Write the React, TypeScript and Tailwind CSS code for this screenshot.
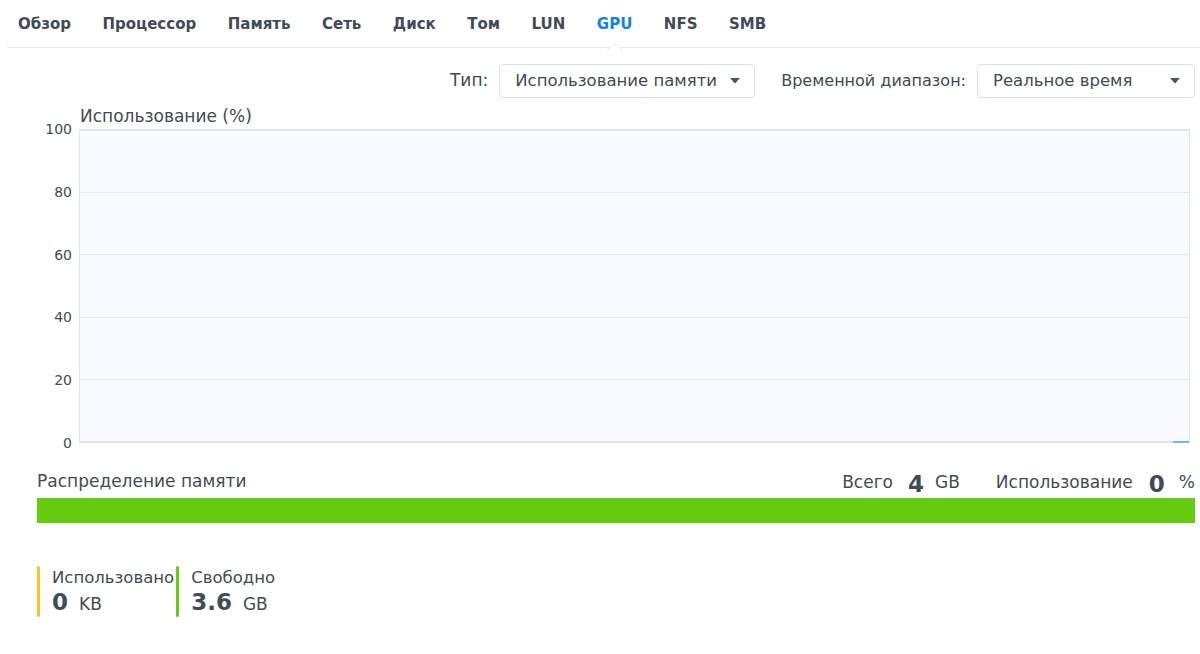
import { useState } from 'react';

const tabs = ['Обзор', 'Процессор', 'Память', 'Сеть', 'Диск', 'Том', 'LUN', 'GPU', 'NFS', 'SMB'];
const ticks = [100, 80, 60, 40, 20, 0];

function Caret() {
  return (
    <svg width="10" height="6" viewBox="0 0 10 6" className="shrink-0">
      <path d="M0 0 L10 0 L5 5.5 Z" fill="#4a5360" />
    </svg>
  );
}

function Select({ value, width }: { value: string; width: string }) {
  return (
    <div className={`flex h-[34px] ${width} items-center rounded-[4px] border border-[#dbe1e8] bg-white pl-[15px] pr-[14px]`}>
      <div className="mr-[8px] flex-1 whitespace-nowrap text-[16.5px] text-[#414b55]">{value}</div>
      <Caret />
    </div>
  );
}

export default function App() {
  const [active, setActive] = useState('GPU');

  return (
    <div className="h-[654px] w-[1200px] overflow-hidden bg-white text-[#414b55]" style={{ fontFamily: '"DejaVu Sans", Verdana, sans-serif' }}>
      {/* tabs */}
      <div className="relative ml-[7px] flex h-[48px] items-center gap-[31.5px] border-b border-[#e3e9f1] pl-[11px] pt-[1px]">
        {tabs.map((t) => (
          <button
            key={t}
            onClick={() => setActive(t)}
            className={`relative text-[15px] font-bold ${active === t ? 'text-[#0b84e8]' : 'text-[#414b55]'}`}
          >
            {t}
            {active === t && (
              <svg width="16" height="8" viewBox="0 0 16 8" className="absolute left-1/2 top-[30px] -translate-x-1/2">
                <path d="M0 8 L8 0.5 L16 8" fill="white" stroke="#e3e9f1" strokeWidth="1" />
                <rect x="1" y="7.5" width="14" height="2" fill="white" />
              </svg>
            )}
          </button>
        ))}
      </div>

      {/* toolbar */}
      <div className="mt-[16px] flex items-center justify-end pr-[5px]">
        <span className="mr-[11px] text-[17px] text-[#414b55]">Тип:</span>
        <Select value="Использование памяти" width="w-[256px]" />
        <span className="ml-[26px] mr-[11px] text-[16px] text-[#414b55]">Временной диапазон:</span>
        <Select value="Реальное время" width="w-[218px]" />
      </div>

      {/* chart */}
      <div className="mt-[8px] pl-[80px] text-[17px] leading-[20px] text-[#414b55]">Использование (%)</div>
      <div className="mt-[3px] flex pr-[10px]">
        <div className="-mt-[8px] flex h-[330px] w-[72px] flex-col justify-between text-right text-[14px] leading-[16px] text-[#414b55]">
          {ticks.map((v) => (
            <div key={v}>{v}</div>
          ))}
        </div>
        <div className="relative ml-[7px] flex h-[314px] flex-1 flex-col justify-between border-x border-[#dde5ee] bg-[#f8faff]">
          {ticks.map((v) => (
            <div key={v} className={`h-[2px] ${v === 0 || v === 100 ? 'bg-[#dde5ee]' : 'h-px bg-[#e4eaf2]'}`} />
          ))}
          <div className="absolute bottom-0 right-0 h-[2px] w-[16px] bg-[#6db8f5]" />
        </div>
      </div>

      {/* memory distribution */}
      <div className="mt-[18px] pl-[37px] pr-[5px]">
        <div className="flex items-end justify-between">
          <span className="mb-[1px] text-[17px] text-[#414b55]">Распределение памяти</span>
          <div className="flex items-end text-[17px] text-[#414b55]">
            <span>Всего</span>
            <span className="ml-[15px] text-[23px] font-bold leading-[23px]">4</span>
            <span className="ml-[11px]">GB</span>
            <span className="ml-[36px]">Использование</span>
            <span className="ml-[16px] text-[23px] font-bold leading-[23px]">0</span>
            <span className="ml-[14px]">%</span>
          </div>
        </div>
        <div className="mt-[2px] h-[25px] bg-[#66cc11]" />

        <div className="mt-[43px] flex gap-[2px]">
          <div className="flex">
            <div className="w-[3px] rounded-full bg-[#fbc125]" />
            <div className="pl-[12px] pt-[2px]">
              <div className="text-[16.5px] leading-[20px]">Использовано</div>
              <div className="mt-[2px] flex items-end pb-[3px]">
                <span className="text-[23px] font-bold leading-[24px]">0</span>
                <span className="ml-[11px] text-[17px] leading-[20px]">KB</span>
              </div>
            </div>
          </div>
          <div className="flex">
            <div className="w-[3px] rounded-full bg-[#66cc11]" />
            <div className="pl-[12px] pt-[2px]">
              <div className="text-[16.5px] leading-[20px]">Свободно</div>
              <div className="mt-[2px] flex items-end pb-[3px]">
                <span className="text-[23px] font-bold leading-[24px]">3.6</span>
                <span className="ml-[11px] text-[17px] leading-[20px]">GB</span>
              </div>
            </div>
          </div>
        </div>
      </div>
    </div>
  );
}
